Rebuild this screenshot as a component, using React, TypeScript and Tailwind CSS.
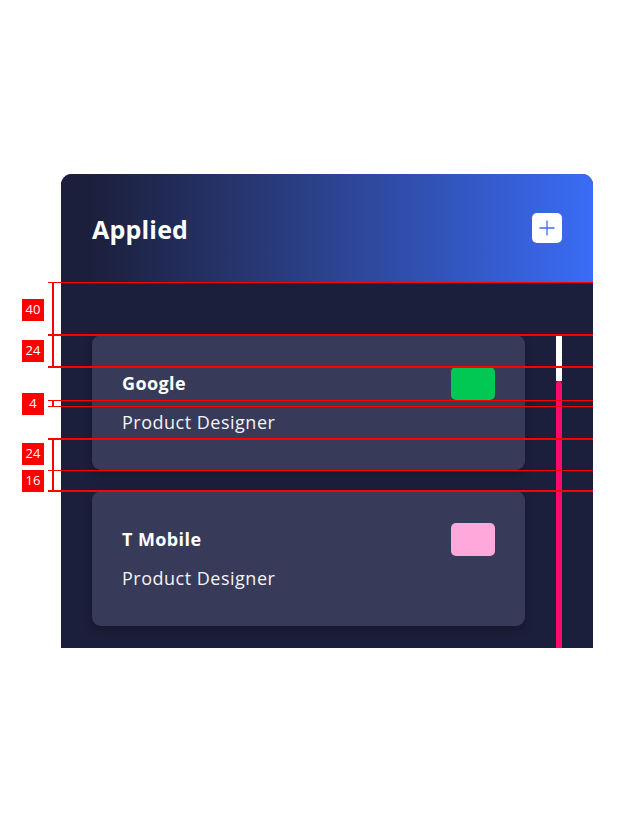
const jobs = [
  { company: 'Google', role: 'Product Designer', swatch: 'bg-[#00c853]' },
  { company: 'T Mobile', role: 'Product Designer', swatch: 'bg-[#ffa8dc]' },
];

// redline measurements drawn over the design
const lines = [282, 335, 367, 400, 406, 439, 470, 491];
const labels = [
  { text: '40', top: 299 },
  { text: '24', top: 340 },
  { text: '4', top: 393 },
  { text: '24', top: 443 },
  { text: '16', top: 470 },
];
const brackets = [
  { top: 282, bottom: 367 },
  { top: 400, bottom: 406 },
  { top: 439, bottom: 491 },
];

function PlusButton() {
  return (
    <button className="flex h-[30px] w-[30px] items-center justify-center rounded-[5px] bg-white">
      <svg width="18" height="18" viewBox="0 0 18 18" fill="none">
        <path d="M9 1.5v15M1.5 9h15" stroke="#3a6cf6" strokeWidth="1.3" />
      </svg>
    </button>
  );
}

function JobCard({ company, role, swatch }: { company: string; role: string; swatch: string }) {
  return (
    <div className="flex w-[433px] items-start justify-between rounded-[9px] bg-[#373a58] pb-[31px] pl-[30px] pr-[31px] pt-[32px] shadow-[0_4px_10px_rgba(0,0,0,0.25)]">
      <div className="flex flex-col gap-[6px]">
        <div className="text-[18px] font-bold leading-[33px] tracking-[0.4px] text-white">{company}</div>
        <div className="text-[18px] font-normal leading-[33px] tracking-[0.5px] text-[#f4f4f8]">{role}</div>
      </div>
      <div className={`mr-[-1px] h-[33px] w-[44px] rounded-[5px] ${swatch}`} />
    </div>
  );
}

export default function App() {
  return (
    <div className="relative h-[824px] w-full bg-white pl-[61px] pt-[174px] font-['Open_Sans',sans-serif]">
      <div className="flex h-[474px] w-[532px] flex-col overflow-hidden rounded-t-[11px] bg-[#1c1f3b]">
        <div className="flex h-[108px] items-center justify-between bg-gradient-to-r from-[#1c1f3b] from-5% to-[#3a6cf6] pl-[31px] pr-[31px]">
          <h1 className="mt-[3px] text-[25px] font-bold tracking-[0.2px] text-white">Applied</h1>
          <PlusButton />
        </div>
        <div className="flex flex-1 pl-[31px]">
          <div className="flex flex-col gap-[21px] pt-[53px]">
            {jobs.map((j) => (
              <JobCard key={j.company} {...j} />
            ))}
          </div>
          <div className="ml-[31px] mt-[53px] flex w-[6px] flex-col">
            <div className="h-[46px] bg-white" />
            <div className="flex-1 rounded-t-[3px] bg-[#ff0a6c]" />
          </div>
        </div>
      </div>

      {lines.map((y) => (
        <div
          key={y}
          className="absolute left-[48px] w-[545px] bg-[#ff0000]"
          style={{ top: y % 2 ? y - 1 : y, height: y % 2 ? 2 : 1 }}
        />
      ))}
      {brackets.map((b) => (
        <div key={b.top} className="absolute left-[52px] w-[2px] bg-[#ff0000]" style={{ top: b.top, height: b.bottom - b.top }} />
      ))}
      {labels.map((l, i) => (
        <div
          key={i}
          className="absolute left-[22px] flex h-[22px] w-[22px] items-center justify-center bg-[#ff0000] text-[13px] text-white"
          style={{ top: l.top }}
        >
          {l.text}
        </div>
      ))}
    </div>
  );
}
